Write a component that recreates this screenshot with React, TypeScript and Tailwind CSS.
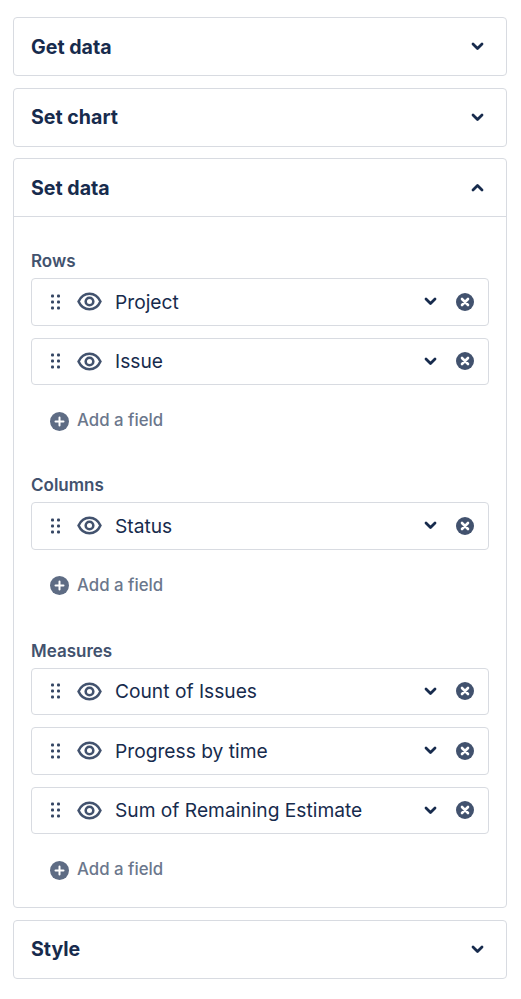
const font = { fontFamily: 'Inter, "Liberation Sans", sans-serif' }

function Chevron({ up }: { up?: boolean }) {
  return (
    <svg width="13" height="9" viewBox="0 0 13 9" fill="none" stroke="#172b4d" strokeWidth="2.8" strokeLinecap="round" strokeLinejoin="round">
      <path d={up ? 'M2 7l4.5-4.5L11 7' : 'M2 2l4.5 4.5L11 2'} />
    </svg>
  )
}

function Grip() {
  return (
    <svg width="9" height="16" viewBox="0 0 9 16" className="text-[#344563]" fill="currentColor">
      {[2, 8, 14].map(y => (
        <g key={y}>
          <rect x="0" y={y - 1.5} width="3" height="3" rx="1" />
          <rect x="6" y={y - 1.5} width="3" height="3" rx="1" />
        </g>
      ))}
    </svg>
  )
}

function Eye() {
  return (
    <svg width="25" height="19" viewBox="0 0 26 20" fill="none" stroke="#42526e" strokeWidth="2.7">
      <path d="M1.5 10C4 4.5 8 1.8 13 1.8S22 4.5 24.5 10C22 15.5 18 18.2 13 18.2S4 15.5 1.5 10Z" />
      <circle cx="13" cy="10" r="4" />
    </svg>
  )
}

function RemoveIcon() {
  return (
    <svg width="18" height="18" viewBox="0 0 18 18">
      <circle cx="9" cy="9" r="9" fill="#42526e" />
      <path d="M6 6l6 6M12 6l-6 6" stroke="#fff" strokeWidth="2.6" strokeLinecap="round" />
    </svg>
  )
}

function PlusIcon() {
  return (
    <svg width="19" height="19" viewBox="0 0 19 19">
      <circle cx="9.5" cy="9.5" r="9.5" fill="#5e6c84" />
      <path d="M9.5 5.5v8M5.5 9.5h8" stroke="#fff" strokeWidth="2" strokeLinecap="round" />
    </svg>
  )
}

function FieldRow({ label }: { label: string }) {
  return (
    <div className="flex h-[47.5px] items-center rounded-[4px] border border-[#d8dbe1] bg-white pl-[19px] pr-[13.5px]">
      <Grip />
      <span className="ml-[16.5px] flex"><Eye /></span>
      <span className="ml-[13.5px] flex-1 pt-[1px] text-[19.2px] text-[#172b4d]">{label}</span>
      <Chevron />
      <span className="ml-[19px] flex"><RemoveIcon /></span>
    </div>
  )
}

function AddField() {
  return (
    <div className="mt-[25px] flex h-[22px] items-center pl-[19px]">
      <PlusIcon />
      <span className="ml-[8px] text-[16.8px] font-medium text-[#6b778c]">Add a field</span>
    </div>
  )
}

function Group({ title, fields, className }: { title: string; fields: string[]; className?: string }) {
  return (
    <div className={className}>
      <div className="mb-[6px] h-[24px] text-[17px] leading-[26px] font-semibold text-[#42526e]">{title}</div>
      <div className="flex flex-col gap-[12px]">
        {fields.map(f => <FieldRow key={f} label={f} />)}
      </div>
      <AddField />
    </div>
  )
}

function Header({ title, up }: { title: string; up?: boolean }) {
  return (
    <div className="flex h-[57px] items-center justify-between pl-[17px] pr-[21.5px]">
      <span className="pt-[2px] text-[19.6px] font-bold text-[#172b4d]">{title}</span>
      <Chevron up={up} />
    </div>
  )
}

export default function App() {
  return (
    <div className="flex w-[521px] flex-col gap-[11.5px] bg-white pl-[13px] pr-[14.5px] pt-[17px]" style={font}>
      <div className="rounded-[4px] border border-[#d8dbe1]"><Header title="Get data" /></div>
      <div className="rounded-[4px] border border-[#d8dbe1]"><Header title="Set chart" /></div>
      <div className="rounded-[4px] border border-[#d8dbe1]">
        <Header title="Set data" up />
        <div className="border-t border-[#d8dbe1] px-[17px] pt-[31px] pb-[26px]">
          <Group title="Rows" fields={['Project', 'Issue']} />
          <Group title="Columns" fields={['Status']} className="mt-[40px]" />
          <Group title="Measures" fields={['Count of Issues', 'Progress by time', 'Sum of Remaining Estimate']} className="mt-[41px]" />
        </div>
      </div>
      <div className="rounded-[4px] border border-[#d8dbe1]"><Header title="Style" /></div>
    </div>
  )
}
